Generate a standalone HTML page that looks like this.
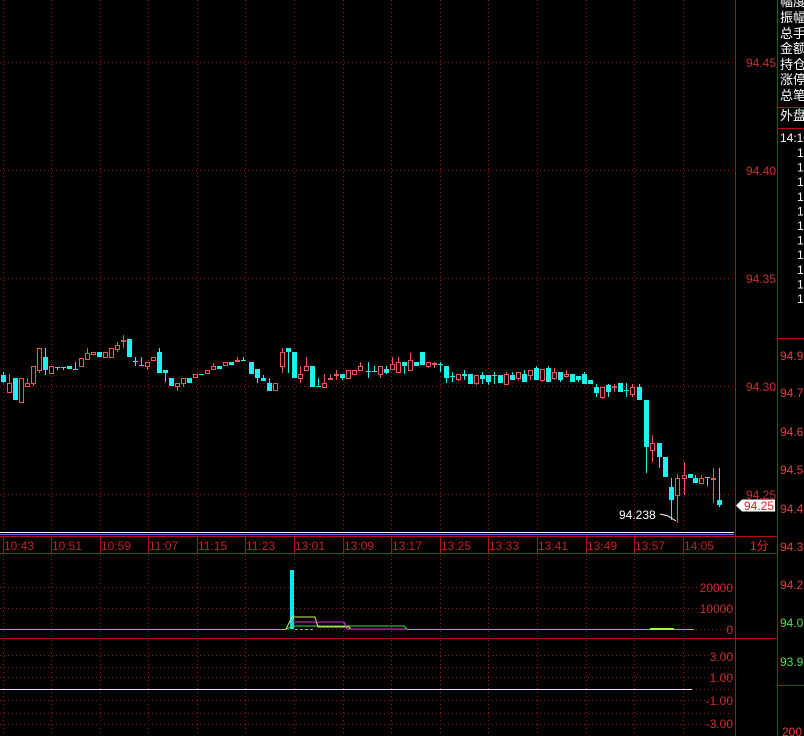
<!DOCTYPE html>
<html><head><meta charset="utf-8"><style>
html,body{margin:0;padding:0;background:#000;width:804px;height:736px;overflow:hidden}
svg{display:block}
text{font-family:"Liberation Sans","Noto Sans CJK SC",sans-serif}
</style></head><body>
<svg id="s" width="804" height="736" viewBox="0 0 804 736" xmlns="http://www.w3.org/2000/svg">
<rect width="804" height="736" fill="#000"/>
<g id="grid" stroke="#a01818" stroke-width="1" stroke-dasharray="1,3">
<line x1="0" y1="62.5" x2="735" y2="62.5"/>
<line x1="0" y1="170.5" x2="735" y2="170.5"/>
<line x1="0" y1="278.5" x2="735" y2="278.5"/>
<line x1="0" y1="386.5" x2="735" y2="386.5"/>
<line x1="0" y1="494.5" x2="735" y2="494.5"/>
<line x1="0" y1="587.5" x2="735" y2="587.5"/>
<line x1="0" y1="608.5" x2="735" y2="608.5"/>
<line x1="0" y1="629.5" x2="735" y2="629.5"/>
<line x1="0" y1="655.5" x2="735" y2="655.5"/>
<line x1="0" y1="667.5" x2="735" y2="667.5"/>
<line x1="0" y1="677.5" x2="735" y2="677.5"/>
<line x1="0" y1="689.5" x2="735" y2="689.5"/>
<line x1="0" y1="700.5" x2="735" y2="700.5"/>
<line x1="0" y1="713.5" x2="735" y2="713.5"/>
<line x1="0" y1="724.5" x2="735" y2="724.5"/>
</g>
<g id="vg" stroke="#a01818" stroke-width="1" stroke-dasharray="1,3"></g>
<g id="c"></g>
<line x1="735.5" y1="0" x2="735.5" y2="736" stroke="#b01010"/>
<line x1="777.5" y1="0" x2="777.5" y2="736" stroke="#b01010"/>
<line x1="0" y1="532.5" x2="734" y2="532.5" stroke="#ffffff"/>
<line x1="0" y1="534.5" x2="734" y2="534.5" stroke="#6070ff"/>
<line x1="0" y1="536.5" x2="777" y2="536.5" stroke="#b01010"/>
<line x1="0" y1="553.5" x2="777" y2="553.5" stroke="#b01010"/>
<line x1="0" y1="638.5" x2="777" y2="638.5" stroke="#b01010"/>
<line x1="777" y1="107.5" x2="804" y2="107.5" stroke="#b01010"/>
<line x1="777" y1="128.5" x2="804" y2="128.5" stroke="#b01010"/>
<line x1="777" y1="338.5" x2="804" y2="338.5" stroke="#b01010"/>
<line x1="777" y1="685.5" x2="804" y2="685.5" stroke="#b01010"/>
<g id="tt" stroke="#b01010"></g>
<g fill="#c83030" font-size="12" text-anchor="end">
<text x="776" y="67">94.45</text>
<text x="776" y="175">94.40</text>
<text x="776" y="283">94.35</text>
<text x="776" y="391">94.30</text>
<text x="776" y="499">94.25</text>
<text x="733" y="592">20000</text>
<text x="733" y="613">10000</text>
<text x="733" y="634">0</text>
<text x="733" y="661">3.00</text>
<text x="733" y="682">1.00</text>
<text x="733" y="705">-1.00</text>
<text x="733" y="728">-3.00</text>
</g>
<g id="tl" fill="#b82828" font-size="12"></g>
<text x="750" y="550" fill="#c83030" font-size="12">1分</text>
<path d="M736 505.5 L742 499.5 H775 V511.5 H742 Z" fill="#fff"/>
<text x="774" y="510" fill="#d02020" font-size="12" text-anchor="end">94.25</text>
<text x="619" y="519" fill="#fff" font-size="12">94.238</text>
<path d="M660 514 L668 516 L676 521" stroke="#fff" fill="none"/>
<rect x="290" y="570" width="4" height="59" fill="#00e8f0"/>
<polyline points="0,629.5 286,629.5 292,626 404,626 407,629.5 694,629.5" fill="none" stroke="#40e040"/>
<polyline points="286,629 292,617 315,617 318,627 349,627 351,629" fill="none" stroke="#e8e850"/>
<polyline points="292,622 344,622 347,629 406,629" fill="none" stroke="#e030e0"/>
<line x1="295" y1="629.5" x2="315" y2="629.5" stroke="#ff8080" stroke-dasharray="3,2"/>
<line x1="650" y1="629" x2="674" y2="629" stroke="#a0ff30" stroke-width="2"/>
<line x1="0" y1="689.5" x2="692" y2="689.5" stroke="#f0f080"/>
<g fill="#fff" font-size="13">
<text x="780" y="6">幅度</text>
<text x="780" y="22">振幅</text>
<text x="780" y="38">总手</text>
<text x="780" y="53">金额</text>
<text x="780" y="69">持仓</text>
<text x="780" y="84">涨停</text>
<text x="780" y="100">总笔</text>
<text x="780" y="120">外盘</text>
<text x="780" y="142" font-size="12">14:10</text>
</g>
<g id="ones" fill="#fff" font-size="12"></g>
<g font-size="12" fill="#e04040">
<text x="780" y="360">94.9</text>
<text x="780" y="397">94.7</text>
<text x="780" y="436">94.6</text>
<text x="780" y="474">94.5</text>
<text x="780" y="513">94.4</text>
<text x="780" y="551">94.3</text>
<text x="780" y="589">94.2</text>
<text x="780" y="666" fill="#50e050">93.9</text>
<text x="780" y="627" fill="#50e050">94.0</text>
<text x="782" y="736">200</text>
</g>
</svg>
<script>
var NS="http://www.w3.org/2000/svg";
function el(p,t,a,txt){var e=document.createElementNS(NS,t);for(var k in a)e.setAttribute(k,a[k]);if(txt)e.textContent=txt;p.appendChild(e);return e;}
var vx=[3,51,100,148,197,245,294,343,391,440,488,537,586,634,683];
var times=["10:43","10:51","10:59","11:07","11:15","11:23","13:01","13:09","13:17","13:25","13:33","13:41","13:49","13:57","14:05"];
var vg=document.getElementById('vg'),tl=document.getElementById('tl'),tt=document.getElementById('tt');
vx.forEach(function(x,i){
 [[0,531],[555,638],[640,736]].forEach(function(r){el(vg,'line',{x1:x+.5,y1:r[0],x2:x+.5,y2:r[1]});});
 el(tt,'line',{x1:x+.5,y1:537,x2:x+.5,y2:553});
 el(tl,'text',{x:x+1,y:550},times[i]);
});
var ones=document.getElementById('ones');
for(var i=0;i<11;i++)el(ones,'text',{x:797,y:157+i*14.6},'1');
var C=[[3,375,382,372,383,'c'],[9,383,392,374,393,'r'],[15,378,400,378,400,'c'],[21,378,402,378,403,'r'],[27,383,386,378,386,'r'],[33,366,383,366,386,'r'],[39,348,370,348,373,'r'],[45,357,370,348,375,'c'],[51,366,373,366,373,'r'],[57,367,368,367,370,'c'],[63,367,368,367,370,'c'],[69,366,369,366,369,'c'],[75,369,370,362,370,'c'],[81,358,366,358,366,'r'],[87,353,359,348,359,'r'],[93,352,354,352,354,'r'],[99,352,357,352,357,'c'],[105,352,357,352,357,'r'],[111,348,357,348,357,'r'],[117,345,349,342,352,'r'],[123,340,341,335,348,'r'],[129,339,357,339,357,'c'],[135,361,362,357,366,'c'],[141,365,366,357,366,'c'],[147,362,366,362,370,'r'],[153,357,360,357,360,'r'],[159,352,373,348,373,'c'],[165,370,373,370,382,'c'],[171,378,386,378,386,'c'],[177,383,386,383,391,'r'],[183,378,383,378,387,'r'],[189,378,383,378,383,'c'],[195,374,377,374,377,'r'],[201,374,375,374,375,'c'],[207,370,373,370,373,'r'],[213,366,369,363,369,'r'],[219,366,369,366,369,'c'],[225,362,365,362,365,'r'],[231,362,365,362,365,'c'],[237,360,361,357,361,'r'],[243,360,361,357,361,'c'],[251,362,374,362,374,'c'],[257,369,378,369,383,'c'],[263,378,381,375,381,'c'],[269,383,391,378,391,'c'],[275,383,390,383,391,'r'],[282,352,366,348,373,'r'],[288,348,352,348,373,'c'],[294,352,378,352,378,'c'],[300,374,378,366,383,'r'],[306,366,370,357,370,'r'],[312,366,387,366,387,'c'],[318,386,387,378,387,'c'],[324,383,387,374,387,'r'],[330,378,379,374,379,'r'],[336,374,375,370,380,'r'],[342,374,378,374,380,'c'],[348,370,378,370,378,'r'],[354,370,374,370,374,'r'],[360,366,370,362,370,'r'],[368,371,372,362,378,'c'],[374,371,372,366,372,'c'],[380,366,374,366,378,'r'],[386,369,373,366,374,'c'],[392,364,369,357,369,'r'],[398,362,372,357,372,'r'],[404,362,366,362,374,'c'],[410,360,370,353,370,'r'],[416,362,366,362,366,'c'],[422,352,365,352,365,'c'],[428,362,366,362,368,'r'],[434,363,364,362,368,'r'],[440,364,365,362,372,'c'],[446,366,378,366,383,'c'],[452,376,377,372,382,'c'],[458,374,379,374,381,'r'],[464,374,376,370,380,'c'],[470,374,384,374,384,'c'],[476,375,383,375,385,'r'],[482,375,379,372,384,'c'],[488,375,382,375,385,'c'],[494,375,376,372,384,'c'],[500,375,383,375,383,'c'],[506,374,384,372,384,'r'],[512,375,380,372,380,'c'],[518,372,378,372,381,'r'],[524,374,382,370,382,'c'],[530,370,375,370,380,'r'],[536,368,380,366,380,'c'],[542,369,380,369,382,'r'],[548,368,382,366,382,'c'],[554,372,378,368,380,'r'],[560,372,380,372,382,'c'],[566,374,376,370,378,'r'],[572,374,382,374,382,'c'],[578,376,380,376,382,'c'],[584,374,384,372,384,'c'],[590,380,384,380,384,'c'],[596,387,393,384,397,'c'],[602,387,397,387,399,'r'],[608,385,392,384,397,'c'],[614,386,387,384,392,'r'],[620,383,392,383,392,'c'],[626,390,391,383,397,'c'],[632,387,394,384,397,'r'],[639,387,400,384,400,'c'],[646,400,447,400,473,'c'],[652,443,450,435,462,'r'],[659,443,457,443,468,'c'],[665,457,477,457,477,'c'],[671,487,500,478,520,'c'],[677,478,495,474,523,'r'],[684,475,478,462,495,'r'],[690,474,478,474,478,'c'],[695,478,483,475,483,'c'],[701,478,483,475,483,'r'],[707,477,478,477,486,'c'],[713,478,479,468,503,'r'],[719,500,505,468,507,'c']];
var g=document.getElementById('c');
C.forEach(function(d){var x=d[0],col=d[5]=='r'?'#f05858':'#20f0f0';
 el(g,'line',{x1:x+.5,y1:d[3],x2:x+.5,y2:d[4],stroke:col});
 var h=Math.max(1,d[2]-d[1]);
 if(d[5]=='r')el(g,'rect',{x:x-1.5,y:d[1]+.5,width:4,height:h,fill:'#000',stroke:col});
 else el(g,'rect',{x:x-2,y:d[1],width:5,height:h,fill:col});
});
</script>
</body></html>
